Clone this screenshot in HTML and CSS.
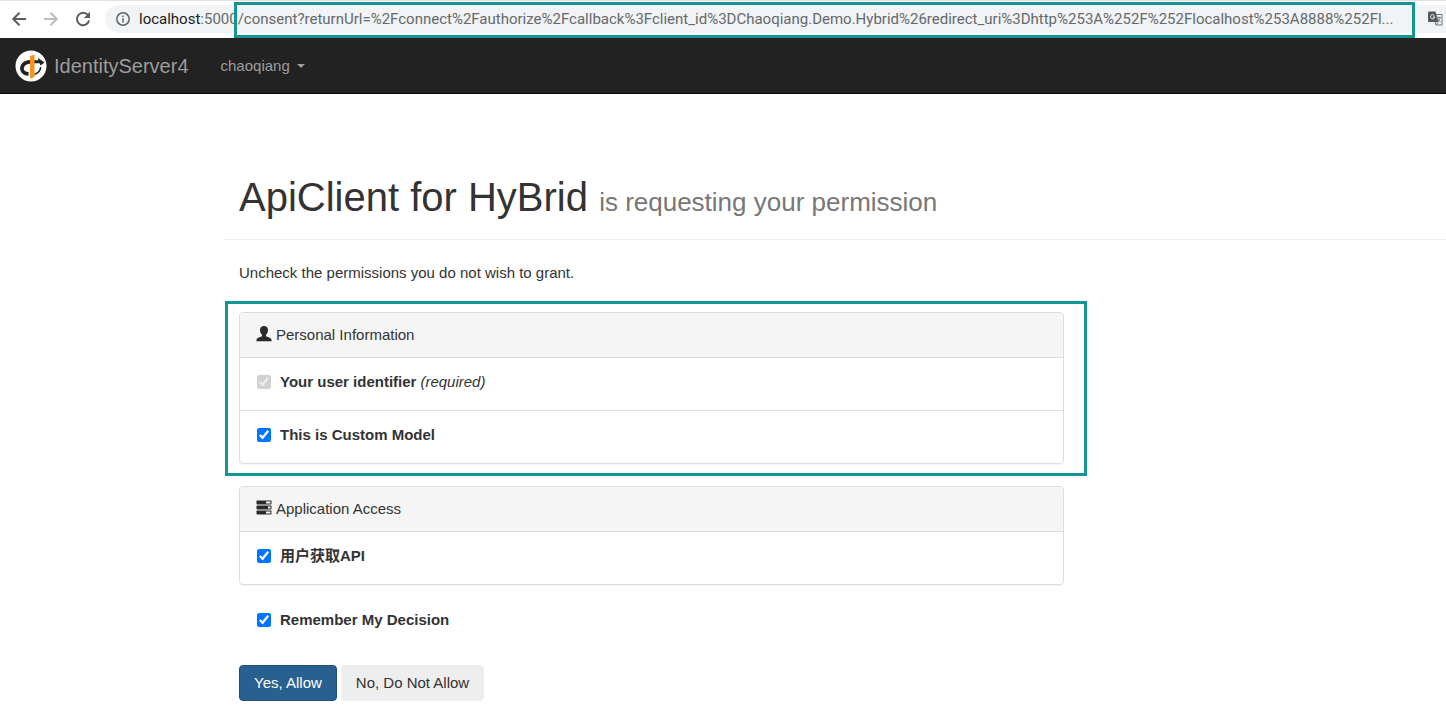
FILE: index.html
```html
<!DOCTYPE html>
<html lang="en">
<head>
<meta charset="utf-8">
<title>IdentityServer4</title>
<link rel="stylesheet" href="styles.css">
</head>
<body>
<div class="toolbar">
  <button class="tool" type="button" aria-label="Back">
    <svg width="16" height="16" viewBox="0 0 16 16" fill="none" stroke="#5a5d61" stroke-width="2"><path d="M15 8H2.5M8.5 1.7 2.2 8l6.3 6.3"/></svg>
  </button>
  <button class="tool" type="button" aria-label="Forward">
    <svg width="16" height="16" viewBox="0 0 16 16" fill="none" stroke="#bcbcbe" stroke-width="2"><path d="M1 8h12.5M7.5 1.7 13.8 8l-6.3 6.3"/></svg>
  </button>
  <button class="tool" type="button" aria-label="Reload">
    <svg width="16" height="16" viewBox="0 0 16 16" fill="none"><path d="M13 4.2A6.2 6.2 0 1 0 14.1 9.6" stroke="#5a5d61" stroke-width="2"/><path d="M15 .8V7H8.800z" fill="#5a5d61"/></svg>
  </button>
  <div class="omnibox">
    <svg class="info" width="14" height="14" viewBox="0 0 14 14" fill="none" stroke="#5f6368" stroke-width="1.500"><circle cx="7" cy="7" r="6.200"/><path d="M7 6.200v4.300M7 3.500v1.500"/></svg>
    <label class="host" for="url">localhost</label>
    <div class="path">
      <input class="url" id="url" type="text" value=":5000/consent?returnUrl=%2Fconnect%2Fauthorize%2Fcallback%3Fclient_id%3DChaoqiang.Demo.Hybrid%26redirect_uri%3Dhttp%253A%252F%252Flocalhost%253A8888%252Fl...">
      <span class="mark mark-url"></span>
    </div>
    <button class="translate" type="button" aria-label="Translate">
      <svg width="15" height="15" viewBox="0 0 15 15"><path d="M5.500 3.500h8.500v10.500H8z" fill="#f1f3f4" stroke="#707478"/><path d="M1 .5h6.500l3 10.500H1Q0 11 0 10V1.500Q0 .5 1 .5z" fill="#55585c"/><path d="M6.400 4.500A2.100 2.100 0 1 0 6.800 6H4.900" fill="none" stroke="#f1f3f4"/><path d="M8.500 6.500H13M10.800 5.500v1M12.300 6.500Q11.500 9 9.500 10.500M9.500 7.500Q10.500 9.500 12.500 11M8 14l2.300-3" fill="none" stroke="#707478" stroke-width=".9"/></svg>
    </button>
  </div>
</div>

<nav class="navbar">
  <a class="brand" href="#">
    <svg width="32" height="32" viewBox="0 0 32 32"><circle cx="16" cy="16" r="15.500" fill="#fff"/><path d="M13.500 24C8.500 23.500 6.300 20.500 7 17.500 8 13.500 12 11.800 16 11.600" fill="none" stroke="#222" stroke-width="3.800"/><path d="M19 10.200H23.500L22.800 7.800 29.500 12.400 25.500 15.500 24.500 13.300H19z" fill="#222"/><path d="M19.500 24.200C23.500 23 25.500 20.500 25.600 17" fill="none" stroke="#222" stroke-width="1.500"/><path d="M15 6l4.500-1.500V27L15 28.500z" fill="#f7931e"/></svg>
    <span>IdentityServer4</span>
  </a>
  <button class="user" type="button">chaoqiang <span class="caret"></span></button>
</nav>

<main class="page">
  <header class="page-header">
    <h1>ApiClient for HyBrid <small>is requesting your permission</small></h1>
  </header>
  <form class="consent">
    <p class="hint">Uncheck the permissions you do not wish to grant.</p>

    <section class="panel">
      <h2 class="panel-heading">
        <svg width="16" height="16" viewBox="0 0 16 16" fill="#2b2b2b"><path d="M8 0C5.200 0 3.900 1.700 4 4.200 4.100 6.500 5 7.700 6 8.600V10C5.300 11.200 1 11.300.6 13.400L.3 15.200H15.700L15.400 13.400C15 11.300 10.700 11.200 10 10V8.600C11 7.700 11.900 6.500 12 4.200 12.100 1.700 10.800 0 8 0z"/></svg>
        Personal Information
      </h2>
      <ul class="scopes">
        <li><label class="check"><input type="checkbox" checked disabled><strong>Your user identifier</strong></label><em>(required)</em></li>
        <li><label class="check"><input type="checkbox" checked><strong>This is Custom Model</strong></label></li>
      </ul>
      <span class="mark mark-panel"></span>
    </section>

    <section class="panel">
      <h2 class="panel-heading">
        <svg width="16" height="16" viewBox="0 0 16 16"><g fill="#2b2b2b"><rect x=".5" y=".5" width="15" height="4" rx=".8"/><rect x=".5" y="5.500" width="15" height="4" rx=".8"/><rect x=".5" y="10.500" width="15" height="4" rx=".8"/></g><g fill="#f5f5f5"><rect x="10" y="1.500" width="4.500" height="2"/><rect x="12" y="6.500" width="2.500" height="2"/><rect x="10" y="11.500" width="4.500" height="2"/></g></svg>
        Application Access
      </h2>
      <ul class="scopes">
        <li><label class="check"><input type="checkbox" checked><strong>用户获取API</strong></label></li>
      </ul>
    </section>

    <div class="remember"><label class="check"><input type="checkbox" checked><strong>Remember My Decision</strong></label></div>

    <div class="actions">
      <button class="btn btn-primary" type="button">Yes, Allow</button>
      <button class="btn" type="button">No, Do Not Allow</button>
    </div>
  </form>
</main>
</body>
</html>
```

FILE: styles.css
```css
* { box-sizing: border-box; }

body {
  margin: 0;
  background: #fff;
  color: #333;
  font: 15px/22px "Liberation Sans", "Noto Sans CJK SC", Arial, sans-serif;
  overflow-x: hidden;
}

button { font: inherit; cursor: pointer; }

.toolbar {
  display: flex;
  align-items: center;
  height: 38px;
  padding: 0 0 2px 11px;
  border-top: 1px solid #dee1e6;
}

.tool {
  display: flex;
  width: 16px;
  margin-right: 16px;
  padding: 0;
  border: 0;
  background: none;
}

.tool:nth-of-type(3) { margin-right: 14px; }

.omnibox {
  flex: 1;
  display: flex;
  align-items: center;
  min-width: 0;
  height: 28px;
  padding-left: 11px;
  border-radius: 14px 0 0 14px;
  background: #f1f3f4;
  font: 15px/28px Roboto, sans-serif;
}

.info { margin-right: 9px; }
.host { color: #202124; }

.path {
  position: relative;
  flex: 1;
  min-width: 0;
  height: 28px;
}

.url {
  display: block;
  width: 100%;
  height: 28px;
  padding: 0;
  border: 0;
  outline: 0;
  background: none;
  color: #65696e;
  font: inherit;
}

.translate {
  display: flex;
  margin-left: 13px;
  padding: 0 3px 0 0;
  border: 0;
  background: none;
}

.mark {
  position: absolute;
  border: 3px solid #149594;
  pointer-events: none;
}

.mark-url { inset: -3px 0 -5px 34px; }
.mark-panel { inset: -12px -24px -13px -15px; }

.navbar {
  display: flex;
  align-items: center;
  height: 56px;
  padding-left: 15px;
  border-bottom: 1px solid #080808;
  background: #222;
}

.brand {
  display: flex;
  align-items: center;
  gap: 7px;
  color: #9d9d9d;
  font-size: 20px;
  text-decoration: none;
}

.user {
  display: flex;
  align-items: center;
  gap: 7px;
  margin-left: 32px;
  padding: 0;
  border: 0;
  background: none;
  color: #9d9d9d;
}

.caret {
  border: 4px solid transparent;
  border-top-color: #9d9d9d;
  border-bottom: 0;
}

.page { padding: 81px 0 0 223px; }

.page-header {
  padding: 0 16px 14px;
  border-bottom: 1px solid #eee;
}

h1 {
  margin: 0;
  font-size: 40px;
  line-height: 45px;
  font-weight: 400;
}

h1 small { color: #777; font-size: 26px; }

.consent {
  max-width: 841px;
  padding-left: 16px;
}

.hint { margin: 22px 0 28px; }

.panel {
  position: relative;
  margin-bottom: 22px;
  border: 1px solid #ddd;
  border-radius: 4px;
  box-shadow: 0 1px 1px rgba(0, 0, 0, .05);
}

.panel-heading {
  display: flex;
  align-items: center;
  gap: 4px;
  margin: 0;
  padding: 11px 16px;
  border-radius: 3px 3px 0 0;
  background: #f5f5f5;
  font-size: 15px;
  font-weight: 400;
}

.panel-heading svg { margin-bottom: 2px; }

.scopes {
  margin: 0;
  padding: 0;
  list-style: none;
}

.scopes li {
  display: flex;
  align-items: flex-start;
  gap: 4px;
  height: 53px;
  padding: 13px 17px;
  border-top: 1px solid #ddd;
}

.check {
  display: flex;
  align-items: center;
}

.check input {
  width: 14px;
  height: 14px;
  margin: 0 9px 0 0;
}

.remember { display: flex; padding: 2px 18px; }

.actions {
  display: flex;
  gap: 4px;
  margin-top: 32px;
}

.btn {
  height: 36px;
  padding: 0 14px;
  border: 1px solid #eee;
  border-radius: 4px;
  background: #eee;
  color: #333;
}

.btn-primary {
  border-color: #204d74;
  background: #286090;
  color: #fff;
}
```
